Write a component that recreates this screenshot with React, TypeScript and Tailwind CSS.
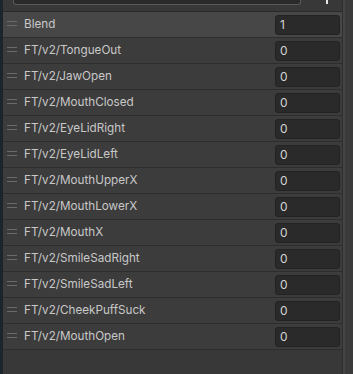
import React from 'react';

const rows = [
  { name: 'Blend', value: '1' },
  { name: 'FT/v2/TongueOut', value: '0' },
  { name: 'FT/v2/JawOpen', value: '0' },
  { name: 'FT/v2/MouthClosed', value: '0' },
  { name: 'FT/v2/EyeLidRight', value: '0' },
  { name: 'FT/v2/EyeLidLeft', value: '0' },
  { name: 'FT/v2/MouthUpperX', value: '0' },
  { name: 'FT/v2/MouthLowerX', value: '0' },
  { name: 'FT/v2/MouthX', value: '0' },
  { name: 'FT/v2/SmileSadRight', value: '0' },
  { name: 'FT/v2/SmileSadLeft', value: '0' },
  { name: 'FT/v2/CheekPuffSuck', value: '0' },
  { name: 'FT/v2/MouthOpen', value: '0' },
];

const Handle = () => (
  <div className="flex flex-col gap-[3px] w-[10px] ml-[4px] mr-[7px] -mt-[3px]">
    <div className="h-px bg-[#6a6a6a]" />
    <div className="h-px bg-[#6a6a6a]" />
  </div>
);

export default function App() {
  return (
    <div
      className="flex w-[353px] h-[374px] bg-[#383838] overflow-hidden"
      style={{ fontFamily: 'Inter, "Noto Sans", sans-serif' }}
    >
      <div className="w-[3px] bg-[#1c252c] shrink-0" />
      <div className="flex-1 flex flex-col">
        {/* header with search field */}
        <div className="h-[12px] flex items-start bg-[#383838] border-b border-[#2a2a2a]">
          <div className="ml-[10px] w-[288px] h-[5px] bg-[#2a2a2a] border border-t-0 border-[#5a5a5a] rounded-b-[3px]" />
          <div className="ml-[25px] w-[2px] h-[4px] bg-[#e6e6e6]" />
        </div>
        {rows.map((row, i) => (
          <div
            key={row.name}
            className={
              'h-[26px] flex items-center border-b border-[#2d2d2d] ' +
              (i === 0 ? 'bg-[#474747]' : 'bg-[#3c3c3c]')
            }
          >
            <Handle />
            <span className="text-[11.7px] text-[#c8c8c8] flex-1 truncate">{row.name}</span>
            <div className="w-[65px] h-[20px] mr-[2px] rounded-[3px] bg-[#2a2a2a] border border-[#222] flex items-center pl-[4px] text-[12px] text-[#d4d4d4]">
              {row.value}
            </div>
          </div>
        ))}
        <div className="flex-1 bg-[#383838]" />
      </div>
      <div className="w-[11px] shrink-0 bg-[#3a3a3a] border-l border-[#2e2e2e] flex">
        <div className="w-[2px] bg-[#454545]" />
      </div>
    </div>
  );
}
